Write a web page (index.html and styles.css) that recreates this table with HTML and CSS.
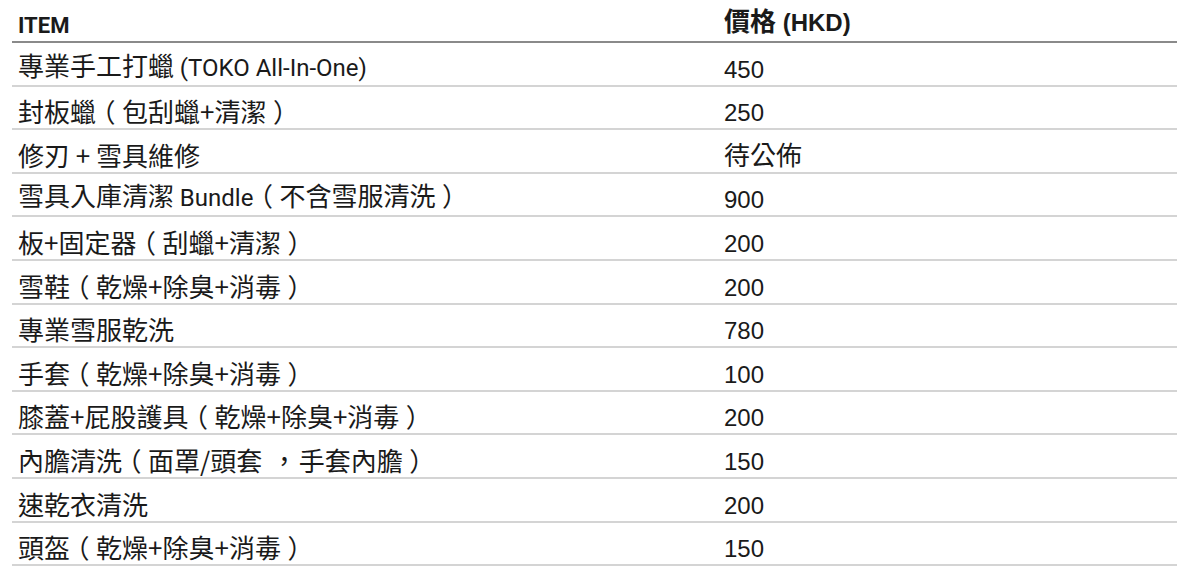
FILE: index.html
```html
<!DOCTYPE html>
<html lang="zh-Hant">
<head>
<meta charset="utf-8">
<link rel="stylesheet" href="styles.css">
</head>
<body>
<table class="price-table">
  <thead>
    <tr>
      <th class="col-item head-item">ITEM</th>
      <th class="col-price head-price"><span class="cjk">價格</span> (HKD)</th>
    </tr>
  </thead>
  <tbody>
    <tr><td class="col-item">專業手工打蠟 <span class="lat">(TOKO All-In-One)</span></td><td class="col-price">450</td></tr>
    <tr><td class="col-item">封板蠟<span class="pn">（</span>包刮蠟+清潔<span class="pn">）</span></td><td class="col-price">250</td></tr>
    <tr><td class="col-item">修刃 + 雪具維修</td><td class="col-price"><span class="cjk">待公佈</span></td></tr>
    <tr><td class="col-item">雪具入庫清潔 <span class="lat">Bundle</span><span class="pn">（</span>不含雪服清洗<span class="pn">）</span></td><td class="col-price">900</td></tr>
    <tr><td class="col-item">板+固定器<span class="pn">（</span>刮蠟+清潔<span class="pn">）</span></td><td class="col-price">200</td></tr>
    <tr><td class="col-item">雪鞋<span class="pn">（</span>乾燥+除臭+消毒<span class="pn">）</span></td><td class="col-price">200</td></tr>
    <tr><td class="col-item">專業雪服乾洗</td><td class="col-price">780</td></tr>
    <tr><td class="col-item">手套<span class="pn">（</span>乾燥+除臭+消毒<span class="pn">）</span></td><td class="col-price">100</td></tr>
    <tr><td class="col-item">膝蓋+屁股護具<span class="pn">（</span>乾燥+除臭+消毒<span class="pn">）</span></td><td class="col-price">200</td></tr>
    <tr><td class="col-item">內膽清洗<span class="pn">（</span>面罩/頭套<span class="pn cm">，</span>手套內膽<span class="pn">）</span></td><td class="col-price">150</td></tr>
    <tr><td class="col-item">速乾衣清洗</td><td class="col-price">200</td></tr>
    <tr><td class="col-item">頭盔<span class="pn">（</span>乾燥+除臭+消毒<span class="pn">）</span></td><td class="col-price">150</td></tr>
  </tbody>
</table>
</body>
</html>
```

FILE: styles.css
```css
html, body {
  margin: 0;
  padding: 0;
  background: #ffffff;
}

body {
  padding: 0 23px 0 12px;
}

.price-table {
  width: 100%;
  border-collapse: collapse;
  color: #1a1a1a;
}

.price-table th {
  height: 42px;
  padding: 0 6px;
  text-align: left;
  vertical-align: bottom;
  font-weight: 700;
  border-bottom: 2px solid #8a8a8a;
  box-sizing: border-box;
}

.head-item {
  font-family: "Roboto", "Noto Sans CJK TC", sans-serif;
  font-size: 22px;
  line-height: 28px;
  padding-bottom: 1px !important;
}

.head-price {
  font-family: "Liberation Sans", "Noto Sans CJK TC", sans-serif;
  font-size: 24px;
  line-height: 28px;
  padding-bottom: 4px !important;
}

.head-price .cjk {
  font-family: "Noto Sans CJK TC", sans-serif;
  font-size: 25px;
  line-height: 1;
}

.price-table td {
  height: 43.6px;
  padding: 0 6px;
  vertical-align: bottom;
  border-bottom: 2px solid #d4d4d4;
  box-sizing: border-box;
}

.col-item {
  width: 706px;
}

td.col-item {
  font-family: "Noto Sans CJK TC", sans-serif;
  font-size: 26px;
  line-height: 32px;
  padding-bottom: 1px;
}

td.col-price {
  font-family: "Liberation Sans", "Noto Sans CJK TC", sans-serif;
  font-size: 24px;
  line-height: 30px;
  padding-bottom: 0;
}

.col-price .cjk {
  font-family: "Noto Sans CJK TC", sans-serif;
  font-size: 26px;
  line-height: 1;
}

.lat {
  font-family: "Roboto", sans-serif;
  font-size: 24px;
}

.pn {
  font-feature-settings: "halt" 1;
  padding: 0 0.25em;
}

.pn.cm {
  padding: 0 0.3em 0 0.6em;
}
```
